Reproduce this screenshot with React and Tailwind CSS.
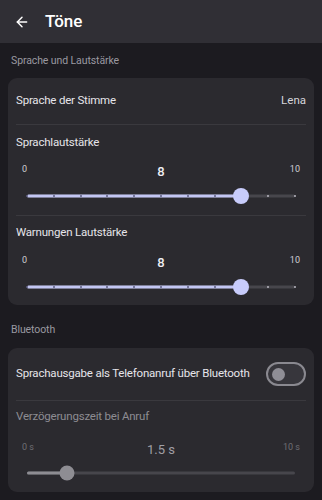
import { ArrowLeft } from "lucide-react";

const font = { fontFamily: "Roboto, 'Noto Sans', sans-serif" };

function Ticks({ count, value, max, dim }) {
  const pct = (value / max) * 100;
  return (
    <div className="relative h-5 mx-[11px]">
      <div className="absolute left-0 right-0 top-1/2 -translate-y-1/2 h-[3px] rounded-full bg-[#47464c]" />
      <div
        className={`absolute left-0 top-1/2 -translate-y-1/2 h-[3px] rounded-full ${dim ? "bg-[#8e8d93]" : "bg-[#c3c6f3]"}`}
        style={{ width: `${pct}%` }}
      />
      {count > 0 &&
        Array.from({ length: count + 1 }).map((_, i) => (
          <div
            key={i}
            className={`absolute top-1/2 -translate-y-1/2 -translate-x-1/2 w-[2px] h-[2px] rounded-full ${
              i / count <= value / max ? "bg-[#5c5d80]" : "bg-[#b8b7c0]"
            }`}
            style={{ left: `${(i / count) * 100}%` }}
          />
        ))}
      <div
        className={`absolute top-1/2 -translate-y-1/2 -translate-x-1/2 rounded-full ${
          dim ? "w-[15px] h-[15px] bg-[#8e8d93]" : "w-[16px] h-[16px] bg-[#c8ccfb]"
        }`}
        style={{ left: `${pct}%` }}
      />
    </div>
  );
}

function SliderBlock({ title, min, max, value, mid, ticks, dim, pt, gap1, gap2, pb }) {
  return (
    <div className={`${pt} ${pb}`}>
      <div className={`text-[11.5px] tracking-[-0.2px] leading-4 ${dim ? "text-[#8d8c92]" : "text-[#e6e5ea]"}`}>{title}</div>
      <div className={`${gap1} flex items-center justify-between h-5 px-[6px]`}>
        <span className={`text-[9px] w-5 ${dim ? "text-[#6f6e74]" : "text-[#cfced4]"}`}>{min}</span>
        <span className={`text-[13px] mt-1 ${dim ? "text-[#a09fa5]" : "text-[#f0eff4] font-medium"}`}>{mid}</span>
        <span className={`text-[9px] w-5 text-right ${dim ? "text-[#6f6e74]" : "text-[#cfced4]"}`}>{max}</span>
      </div>
      <div className={gap2}>
        <Ticks count={ticks} value={value} max={ticks || 10} dim={dim} />
      </div>
    </div>
  );
}

export default function App() {
  return (
    <div className="w-[322px] h-[500px] bg-[#1c1b20] overflow-hidden" style={font}>
      <header className="h-[43px] bg-[#302f35] flex items-center px-[14px] gap-[15px]">
        <ArrowLeft size={16} strokeWidth={2.2} className="text-white" />
        <span className="text-[17px] font-medium text-white">Töne</span>
      </header>

      <div className="px-[11px] pt-[11px] pb-[10px] text-[10.5px] tracking-[-0.1px] leading-[14px] text-[#9a99a0]">Sprache und Lautstärke</div>

      <div className="mx-2 rounded-[9px] bg-[#2b2a2f] px-2">
        <div className="h-[46px] flex items-center justify-between">
          <span className="text-[11.5px] tracking-[-0.2px] text-[#e6e5ea]">Sprache der Stimme</span>
          <span className="text-[11.5px] text-[#d6d5db]">Lena</span>
        </div>
        <div className="h-px bg-[#3a393e]" />
        <SliderBlock title="Sprachlautstärke" min="0" max="10" mid="8" value={8} ticks={10} pt="pt-[9px]" gap1="mt-[10px]" gap2="mt-[6px]" pb="pb-[9px]" />
        <div className="h-px bg-[#3a393e]" />
        <SliderBlock title="Warnungen Lautstärke" min="0" max="10" mid="8" value={8} ticks={10} pt="pt-[8px]" gap1="mt-[11px]" gap2="mt-[6px]" pb="pb-[8px]" />
      </div>

      <div className="px-[11px] pt-[18px] pb-[11px] text-[10.5px] tracking-[-0.1px] leading-[14px] text-[#9a99a0]">Bluetooth</div>

      <div className="mx-2 rounded-[9px] bg-[#2b2a2f] px-2">
        <div className="h-[52px] flex items-center justify-between">
          <span className="text-[11.5px] tracking-[-0.2px] text-[#e6e5ea] whitespace-nowrap">Sprachausgabe als Telefonanruf über Bluetooth</span>
          <div className="w-10 h-6 shrink-0 rounded-full border-2 border-[#8a8990] bg-[#37363c] flex items-center px-[4px]">
            <div className="w-[13px] h-[13px] rounded-full bg-[#8f8e96]" />
          </div>
        </div>
        <div className="h-px bg-[#3a393e]" />
        <SliderBlock title="Verzögerungszeit bei Anruf" min="0 s" max="10 s" mid="1.5 s" value={1.5} ticks={0} dim pt="pt-[7px]" gap1="mt-[14px]" gap2="mt-[5px]" pb="pb-[9px]" />
      </div>
    </div>
  );
}
